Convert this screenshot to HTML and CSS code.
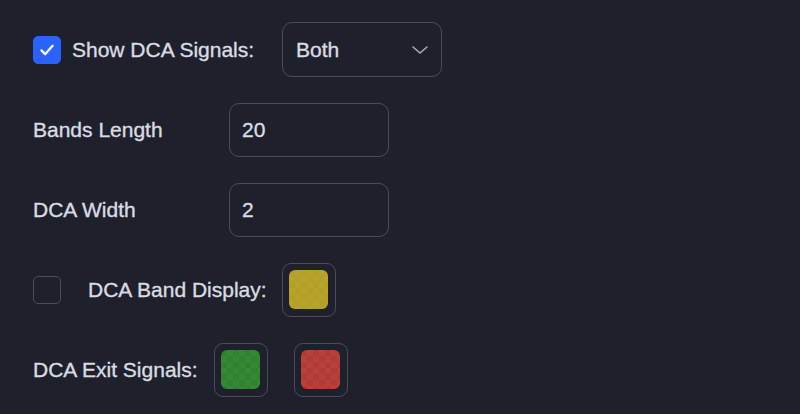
FILE: index.html
```html
<!DOCTYPE html>
<html>
<head>
<meta charset="utf-8">
<link rel="stylesheet" href="styles.css">
</head>
<body>
<div class="panel">
  <div class="row">
    <span class="check checked">
      <svg viewBox="0 0 28 28" width="28" height="28"><path d="M8 14.5l4 4 8-9" fill="none" stroke="#fff" stroke-width="2.6" stroke-linecap="round" stroke-linejoin="round"/></svg>
    </span>
    <span class="label l-show">Show DCA Signals:</span>
    <div class="field select">
      <span class="value">Both</span>
      <svg class="chev" viewBox="0 0 18 10" width="18" height="10"><path d="M2 2l7 6 7-6" fill="none" stroke="#a9acb5" stroke-width="1.6" stroke-linecap="round" stroke-linejoin="round"/></svg>
    </div>
  </div>
  <div class="row">
    <span class="label l-fixed">Bands Length</span>
    <div class="field"><span class="value">20</span></div>
  </div>
  <div class="row">
    <span class="label l-fixed">DCA Width</span>
    <div class="field"><span class="value">2</span></div>
  </div>
  <div class="row">
    <span class="check"></span>
    <span class="label l-band">DCA Band Display:</span>
    <div class="swatch"><span class="color yellow"></span></div>
  </div>
  <div class="row">
    <span class="label l-exit">DCA Exit Signals:</span>
    <div class="swatch sw-green"><span class="color green"></span></div>
    <div class="swatch sw-red"><span class="color red"></span></div>
  </div>
</div>
</body>
</html>
```
FILE: styles.css
```css
html, body {
  margin: 0;
  padding: 0;
  background: #1e212c;
  width: 800px;
  height: 414px;
  overflow: hidden;
}
.panel {
  padding: 22px 0 0 33px;
  display: flex;
  flex-direction: column;
  gap: 25px;
  font-family: "Liberation Sans", Arial, sans-serif;
  font-size: 21px;
  color: #dadce2;
  -webkit-text-stroke: 0.35px #dadce2;
}
.row {
  display: flex;
  align-items: center;
  height: 55px;
}
.check {
  width: 26px;
  height: 26px;
  border: 1.5px solid #4b4e59;
  border-radius: 5px;
  box-sizing: content-box;
  display: flex;
  align-items: center;
  justify-content: center;
  flex: none;
}
.check.checked {
  background: #2962ff;
  border-color: #2962ff;
}
.check svg { display: block; }
.label { white-space: nowrap; }
.l-show { margin-left: 11px; margin-right: 28px; }
.l-fixed { width: 196px; }
.l-band { margin-left: 27px; margin-right: 15px; }
.l-exit { margin-right: 15px; }
.field {
  width: 160px;
  height: 54px;
  box-sizing: border-box;
  border: 1.5px solid #4a4d58;
  border-radius: 10px;
  display: flex;
  align-items: center;
  padding-left: 12px;
  padding-right: 12px;
}
.select {
  height: 55px;
  padding-left: 13px;
  justify-content: space-between;
}
.chev { display: block; margin-top: 1px; }
.swatch {
  width: 54px;
  height: 54px;
  box-sizing: border-box;
  border: 1.5px solid #4a4d58;
  border-radius: 9px;
  display: flex;
  align-items: center;
  justify-content: center;
  flex: none;
}
.sw-green { margin-left: 1px; }
.sw-red { margin-left: 26px; }
.color {
  width: 39px;
  height: 39px;
  border-radius: 6px;
  background-image:
    linear-gradient(45deg, rgba(255,255,255,0.035) 25%, transparent 25%, transparent 75%, rgba(255,255,255,0.035) 75%),
    linear-gradient(45deg, rgba(255,255,255,0.035) 25%, transparent 25%, transparent 75%, rgba(255,255,255,0.035) 75%);
  background-size: 12px 12px;
  background-position: 0 0, 6px 6px;
}
.yellow { background-color: #b3a027; }
.green { background-color: #2f832f; }
.red { background-color: #b33b36; }
```
